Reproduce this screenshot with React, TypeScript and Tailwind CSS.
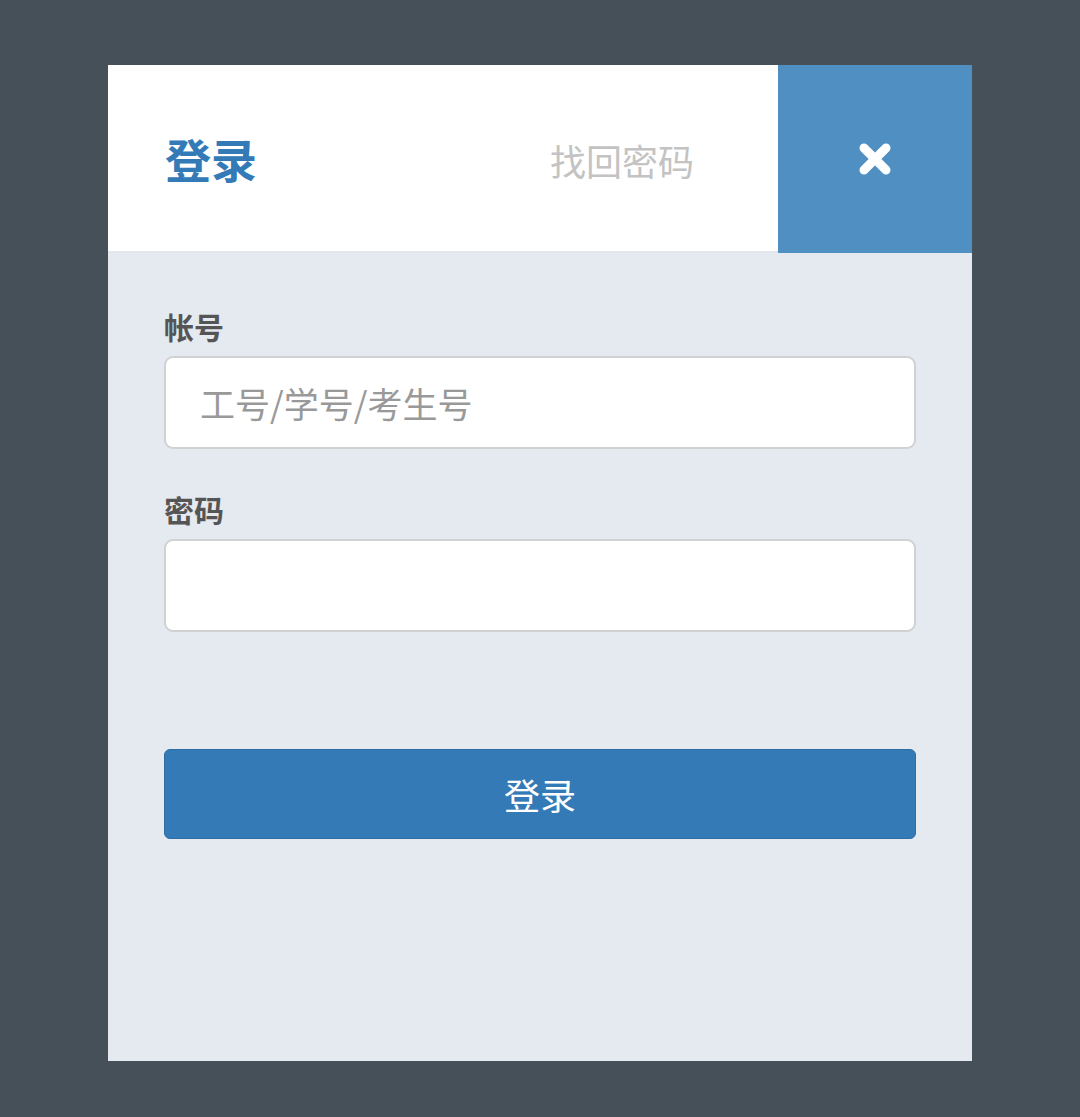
import React from "react";

export default function App() {
  return (
    <div
      className="w-[1080px] h-[1117px] bg-[#465059] pt-[65px] pl-[108px]"
      style={{ fontFamily: '"Noto Sans CJK SC", "Noto Sans", sans-serif' }}
    >
      <div className="w-[864px] h-[996px] bg-[#e5e9f0] flex flex-col">
        <div className="h-[188px] flex bg-white border-b-2 border-[#e3e6ea]">
          <div className="flex-1 flex items-center pl-[57px]">
            <span className="text-[46px] font-bold text-[#337ab7] leading-none">登录</span>
            <span className="ml-[293px] mt-[3px] text-[36px] text-[#c3c3c3] leading-none">找回密码</span>
          </div>
          <div className="w-[194px] h-[188px] -mb-[2px] bg-[#4f8fc1] flex items-center justify-center">
            <svg width="34" height="34" viewBox="0 0 34 34">
              <path d="M6 6 L28 28 M28 6 L6 28" stroke="white" strokeWidth="9" strokeLinecap="round" />
            </svg>
          </div>
        </div>
        <div className="px-[56px] pt-[58px]">
          <div className="text-[30px] font-bold text-[#555] leading-none mb-[15px]">帐号</div>
          <div className="h-[93px] bg-white border-2 border-[#cfd1d3] rounded-[9px] flex items-center pl-[34px]">
            <span className="text-[35px] text-[#999] leading-none">工号/学号/考生号</span>
          </div>
          <div className="text-[30px] font-bold text-[#555] leading-none mt-[45px] mb-[15px]">密码</div>
          <div className="h-[93px] bg-white border-2 border-[#cfd1d3] rounded-[9px]" />
          <div className="mt-[117px] h-[90px] bg-[#337ab7] border border-[#2e6da4] rounded-[6px] flex items-center justify-center">
            <span className="text-[36px] text-white leading-none">登录</span>
          </div>
        </div>
      </div>
    </div>
  );
}
